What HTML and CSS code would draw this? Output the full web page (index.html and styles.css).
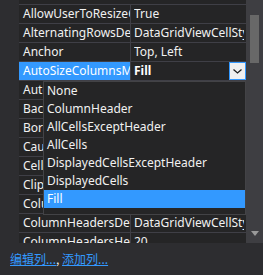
FILE: index.html
```html
<!DOCTYPE html>
<html lang="en">
<head>
	<meta charset="utf-8" />
	<title>Properties</title>
	<link rel="stylesheet" href="styles.css">
</head>
<body>
	<div class="pane">
		<div class="main">
			<div class="gutter"></div>
			<div class="rows">
				<div class="stub"></div>
				<div class="row"><div class="name">AllowUserToResizeColumns</div><div class="value"><span class="clip">True</span></div></div>
				<div class="row"><div class="name">AlternatingRowsDefaultCellStyle</div><div class="value"><span class="clip">DataGridViewCellStyle { }</span></div></div>
				<div class="row"><div class="name">Anchor</div><div class="value"><span class="clip">Top, Left</span></div></div>
				<div class="row selected">
					<div class="name">AutoSizeColumnsMode</div>
					<div class="value"><b>Fill</b>
						<span class="drop-btn">
							<svg width="9" height="5" viewBox="0 0 9 5"><polyline points="0.5,0.5 4.5,4 8.5,0.5" fill="none" stroke="#1e1e1e" stroke-width="1.3"/></svg>
						</span>
					</div>
				</div>
				<div class="row"><div class="name">AutoGenerateColumns</div><div class="value"><span class="clip">True</span></div></div>
				<div class="row"><div class="name">BackgroundColor</div><div class="value"><span class="clip">AppWorkspace</span></div></div>
				<div class="row"><div class="name">BorderStyle</div><div class="value"><span class="clip">FixedSingle</span></div></div>
				<div class="row"><div class="name">CausesValidation</div><div class="value"><span class="clip">True</span></div></div>
				<div class="row"><div class="name">CellBorderStyle</div><div class="value"><span class="clip">Single</span></div></div>
				<div class="row"><div class="name">ClipboardCopyMode</div><div class="value"><span class="clip">EnableWithAutoHeaderText</span></div></div>
				<div class="row"><div class="name">ColumnHeadersBorderStyle</div><div class="value"><span class="clip">Raised</span></div></div>
				<div class="row"><div class="name">ColumnHeadersDefaultCellStyle</div><div class="value"><span class="clip">DataGridViewCellStyle { }</span></div></div>
				<div class="row"><div class="name">ColumnHeadersHeight</div><div class="value"><span class="clip">20</span></div></div>
			</div>
			<div class="vscroll">
				<div class="thumb"></div>
				<div class="arrow"></div>
			</div>
		</div>

		<div class="commands">
			<a href="#">编辑列...</a>, <a href="#">添加列...</a>
		</div>

		<ul class="dropdown">
			<li>None</li>
			<li>ColumnHeader</li>
			<li>AllCellsExceptHeader</li>
			<li>AllCells</li>
			<li>DisplayedCellsExceptHeader</li>
			<li>DisplayedCells</li>
			<li class="active">Fill</li>
		</ul>
	</div>
</body>
</html>
```

FILE: styles.css
```css
body{margin:0;background:#252526;font-family:"Noto Sans","Noto Sans CJK SC",sans-serif;font-size:12px;color:#f1f1f1;}
.pane{position:relative;width:263px;height:275px;overflow:hidden;}

.main{display:flex;height:243px;overflow:hidden;background:#252526;}
.gutter{width:19px;flex:none;background:#2d2d30;}
.rows{width:227px;flex:none;}
.stub{height:4px;}
.row{display:flex;height:18px;line-height:18px;border-top:1px solid #3f3f46;}
.name{width:107px;flex:none;padding-left:4px;border-right:1px solid #3f3f46;white-space:nowrap;overflow:hidden;}
.value{flex:1;min-width:0;display:flex;padding-left:3px;white-space:nowrap;overflow:hidden;}
.value .clip{flex:1;min-width:0;overflow:hidden;margin-right:2px;}
.row.selected .name{background:#3399ff;color:#fff;}
.value b{font-weight:bold;color:#fff;}
.drop-btn{margin-left:auto;width:17px;height:18px;flex:none;box-sizing:border-box;border:1px solid #3399ff;background:#f0f0f0;display:flex;align-items:center;justify-content:center;}

.vscroll{width:17px;flex:none;background:#3e3e42;display:flex;flex-direction:column;align-items:center;padding-top:15px;box-sizing:border-box;}
.thumb{width:9px;height:48px;background:#686868;}
.arrow{margin-top:auto;margin-bottom:7px;width:0;height:0;border-left:4.5px solid transparent;border-right:4.5px solid transparent;border-top:5px solid #999;}

.commands{height:32px;line-height:32px;padding-left:10px;background:#2d2d30;color:#f1f1f1;font-family:"Noto Sans CJK SC","Noto Sans",sans-serif;}
.commands a{color:#3399ff;text-decoration:underline;}

.dropdown{position:absolute;left:43px;top:81px;width:201px;margin:0;padding:0 0 6px;list-style:none;background:#252526;border:1px solid #434346;}
.dropdown li{height:18px;line-height:18px;padding-left:3px;white-space:nowrap;}
.dropdown li.active{background:#3399ff;color:#fff;}
```
